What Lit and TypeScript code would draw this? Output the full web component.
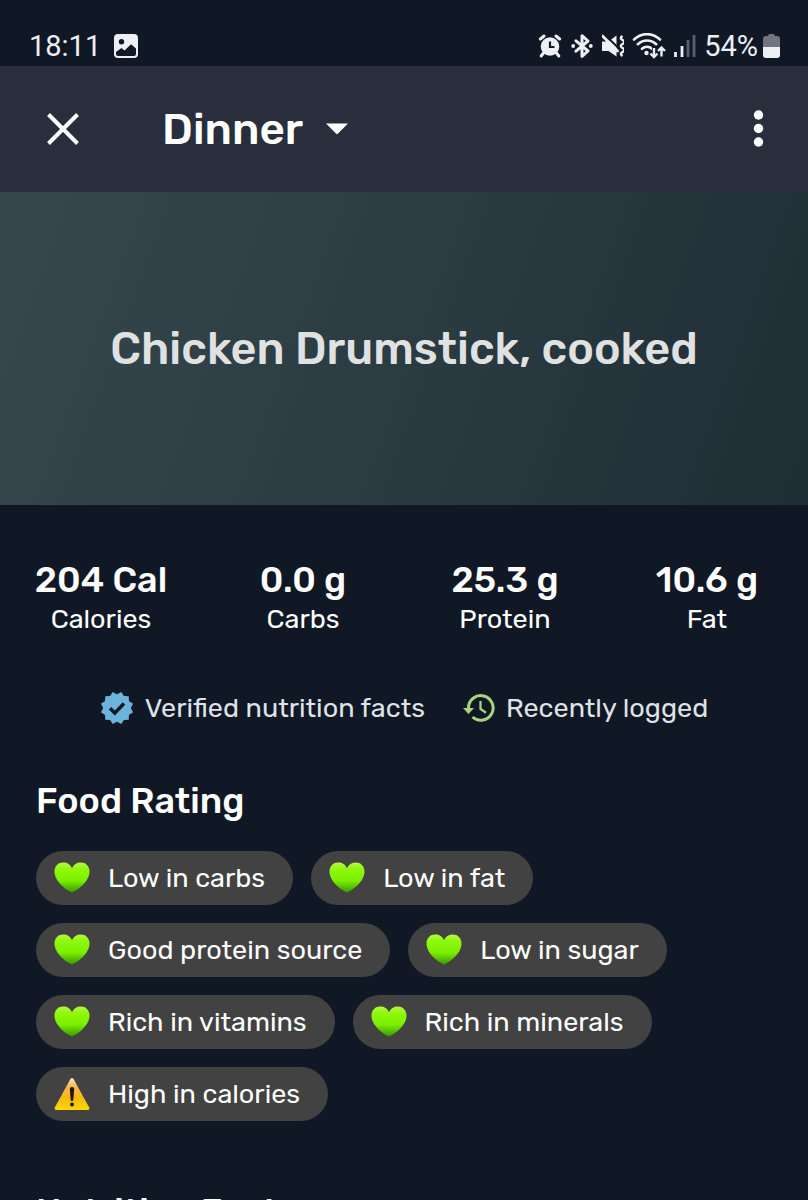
import { LitElement, html, svg, css } from "lit";
import { customElement } from "lit/decorators.js";

interface Rating {
  label: string;
  good: boolean;
}

const stats = [
  { value: "204 Cal", label: "Calories" },
  { value: "0.0 g", label: "Carbs" },
  { value: "25.3 g", label: "Protein" },
  { value: "10.6 g", label: "Fat" },
];

const ratings: Rating[] = [
  { label: "Low in carbs", good: true },
  { label: "Low in fat", good: true },
  { label: "Good protein source", good: true },
  { label: "Low in sugar", good: true },
  { label: "Rich in vitamins", good: true },
  { label: "Rich in minerals", good: true },
  { label: "High in calories", good: false },
];

const heart = html`<svg width="36" height="36" viewBox="0 0 36 36" aria-hidden="true">
  <defs>
    <linearGradient id="leaf" x1="0" y1="0" x2="0" y2="1">
      <stop offset="0" stop-color="#b9f548" />
      <stop offset="0.2" stop-color="#8ffa0c" />
      <stop offset="0.6" stop-color="#7cee00" />
      <stop offset="1" stop-color="#379a00" />
    </linearGradient>
  </defs>
  <path fill="url(#leaf)" d="M18 32.500C12.500 30 .500 22 .500 11.500C.500 6 4.400 2.600 9.200 2.600c4 0 7.300 2 8.800 5.700 1.500-3.700 4.800-5.700 8.800-5.700 4.800 0 8.700 3.400 8.700 8.900C35.500 22 23.500 30 18 32.500Z" />
</svg>`;

const warning = html`<svg width="36" height="36" viewBox="0 0 36 36" aria-hidden="true">
  <defs>
    <linearGradient id="amber" x1="0" y1="0" x2="0" y2="1">
      <stop offset="0" stop-color="#ffe3c8" />
      <stop offset="0.3" stop-color="#fdb544" />
      <stop offset="0.62" stop-color="#fdb813" />
      <stop offset="1" stop-color="#ffd800" />
    </linearGradient>
  </defs>
  <path fill="url(#amber)" d="M16.300 3.200q1.700-2.600 3.400 0L35.200 31.500q.800 2.500-1.800 2.500H2.600Q0 34 .800 31.500Z" />
  <path fill="#221600" d="M15.800 12.800q0-1.800 2.200-1.800t2.200 1.800l-.900 11.200q-.100 1-1.300 1t-1.300-1Z" />
  <circle cx="18" cy="28.500" r="2" fill="#221600" />
</svg>`;

/* Twelve-pointed badge outline: outer and inner vertices alternate. */
const sealPoints = Array.from({ length: 24 }, (_, i) => {
  const a = (Math.PI * (i + 1)) / 12;
  const r = i % 2 ? 13.8 : 16.6;
  return `${(17 + r * Math.cos(a)).toFixed(2)},${(17 + r * Math.sin(a)).toFixed(2)}`;
}).join(" ");

@customElement("app-root")
export class AppRoot extends LitElement {
  static styles = css`
    :host {
      display: flex;
      flex-direction: column;
      height: 100vh;
      background: #111825;
      color: #fff;
      font-family: Rubik, Roboto, sans-serif;
    }
    * {
      box-sizing: border-box;
    }
    svg {
      display: block;
      flex: none;
    }
    .status {
      display: flex;
      align-items: center;
      justify-content: space-between;
      flex: none;
      padding: 26px 28px 0 29px;
      height: 66px;
      color: #eceff3;
      font-family: Roboto, sans-serif;
      font-size: 29px;
      line-height: 40px;
    }
    .group {
      display: flex;
      align-items: center;
      gap: 13px;
    }
    .signals {
      gap: 8px;
    }
    .charge {
      display: flex;
      align-items: center;
      gap: 5px;
    }
    .bar {
      display: flex;
      align-items: center;
      flex: none;
      height: 126px;
      padding: 0 24px 0 36px;
      background: #282e3c;
    }
    .icon-button {
      display: flex;
      padding: 0;
      border: 0;
      background: none;
      color: inherit;
      cursor: pointer;
    }
    .meal {
      display: flex;
      align-items: center;
      flex: 1;
      padding-left: 72px;
    }
    .meal-select {
      appearance: none;
      margin: 0 -44px 0 0;
      padding: 0 66px 0 0;
      border: 0;
      background: none;
      color: inherit;
      font: 500 44px/56px Rubik, Roboto, sans-serif;
      cursor: pointer;
    }
    .caret {
      pointer-events: none;
    }
    .content {
      flex: 1;
      min-height: 0;
      overflow-y: auto;
      scrollbar-width: none;
    }
    .hero {
      display: grid;
      place-items: center;
      min-height: 313px;
      padding: 0 36px;
      background: linear-gradient(110deg, #37474d 0%, #2a3b42 52%, #1f2d35 100%);
    }
    .name {
      margin: 0;
      color: #e0e1e1;
      font-size: 45px;
      line-height: 56px;
      font-weight: 500;
      text-align: center;
    }
    .stats {
      display: grid;
      grid-template-columns: repeat(4, 1fr);
      margin: 0;
      padding-top: 54px;
      text-align: center;
    }
    .stat {
      display: flex;
      flex-direction: column-reverse;
    }
    .stat-value {
      margin: 0;
      font-size: 36px;
      line-height: 42px;
      font-weight: 500;
    }
    .stat-label {
      font-size: 27px;
      line-height: 36px;
    }
    .facts {
      display: flex;
      flex-wrap: wrap;
      justify-content: center;
      gap: 12px 38px;
      padding: 53px 36px 0;
      color: #dfe2e6;
      font-size: 27px;
      line-height: 36px;
    }
    .fact {
      display: flex;
      align-items: center;
      gap: 11px;
    }
    .section {
      padding: 52px 36px 0;
    }
    .heading {
      margin: 0;
      font-size: 36px;
      line-height: 46px;
      font-weight: 500;
    }
    .chips {
      display: flex;
      flex-wrap: wrap;
      gap: 18px;
      margin: 0;
      padding: 27px 0 16px;
      list-style: none;
    }
    .chip {
      display: flex;
      align-items: center;
      gap: 18px;
      height: 54px;
      padding: 0 28px 0 18px;
      border-radius: 27px;
      background: #424242;
      font-size: 27px;
      line-height: 36px;
    }
  `;

  render() {
    return html`
      <div class="status">
        <div class="group">
          <span>18:11</span>
          <svg width="24" height="24" viewBox="0 0 24 24" aria-hidden="true">
            <path fill="currentColor" fill-rule="evenodd" d="M4 0h16a4 4 0 0 1 4 4v16a4 4 0 0 1-4 4H4a4 4 0 0 1-4-4V4a4 4 0 0 1 4-4Zm3.500 5a2.700 2.700 0 1 0 0 5.400 2.700 2.700 0 0 0 0-5.400ZM2 18v2q0 2 2 2h16q2 0 2-2v-5.500l-5-4.300-6.500 6.300-3-2.500Z" />
          </svg>
        </div>
        <div class="group signals">
          <svg width="24" height="24" viewBox="0 0 24 24" aria-hidden="true">
            <circle cx="12" cy="12.500" r="9.300" fill="currentColor" />
            <path d="M2.400 5 6 2M21.600 5 18 2M5.500 19l-2.300 3M18.500 19l2.300 3" stroke="currentColor" stroke-width="3" stroke-linecap="round" />
            <path d="M12 7.500V13h4.500" fill="none" stroke="#111825" stroke-width="2.200" />
          </svg>
          <svg width="24" height="24" viewBox="0 0 24 24" aria-hidden="true">
            <path d="M6 6.800 18 17l-6 5.300V1.700L18 7 6 17.200" fill="none" stroke="currentColor" stroke-width="3" stroke-linejoin="round" stroke-linecap="round" />
            <circle cx="3.200" cy="12" r="1.900" fill="currentColor" />
            <circle cx="20.800" cy="12" r="1.900" fill="currentColor" />
          </svg>
          <svg width="22" height="24" viewBox="1 0 22 24" aria-hidden="true">
            <path fill="currentColor" d="M1 7.500h6.500L15.500 1.500v21L7.500 17H1Z" />
            <path d="M3 0 18 14.500" stroke="#111825" stroke-width="2" />
            <path d="M1.500 2 16.500 17" stroke="currentColor" stroke-width="2.800" stroke-linecap="round" />
            <path d="M21.500 2c-2.300 1.700-2.300 2.700 0 4s2.300 2.700 0 4-2.300 2.700 0 4 2.300 2.700 0 4-2 2.500 0 4" fill="none" stroke="currentColor" stroke-width="2.400" />
          </svg>
          <svg width="34" height="26" viewBox="0 0 34 26" aria-hidden="true">
            <g fill="none" stroke="currentColor" stroke-width="2.600" stroke-linecap="round">
              <path d="M2 6.500C10-.700 20-.700 28 6.500M5.800 11.200c5.600-5 12.800-5 18.400 0M10 15.800c3-2.700 7-2.700 10 0" />
            </g>
            <circle cx="14.500" cy="20" r="2.200" fill="currentColor" />
            <g fill="none" stroke="#111825" stroke-width="5">
              <path d="M22.500 14v10M30 24V15" />
            </g>
            <g fill="none" stroke="currentColor" stroke-width="2.400">
              <path d="M22 15v9M18.500 20.500l3.500 3.500 3.500-3.500M29.500 23.500v-9M26 18l3.500-3.500L33 18" />
            </g>
          </svg>
          <svg width="22" height="24" viewBox="0 0 22 24" aria-hidden="true">
            <path d="M1.500 23v-5M8 23V12" stroke="currentColor" stroke-width="2.800" />
            <path d="M14 23V6M20 23V1" stroke="#5a606b" stroke-width="2.800" />
          </svg>
          <span class="charge">
            <span>54%</span>
            <svg width="17" height="24" viewBox="0 0 17 24" aria-hidden="true">
              <path fill="#6f747f" d="M5 2q0-2 2-2h3q2 0 2 2h2q3 0 3 3v8H0V5q0-3 3-3Z" />
              <path fill="currentColor" d="M0 13h17v8q0 3-3 3H3q-3 0-3-3Z" />
            </svg>
          </span>
        </div>
      </div>

      <header class="bar">
        <button class="icon-button" type="button" aria-label="Close">
          <svg width="54" height="54" viewBox="0 0 54 54" aria-hidden="true">
            <path d="m12.500 12.500 29 29M41.500 12.500l-29 29" stroke="currentColor" stroke-width="4" />
          </svg>
        </button>
        <div class="meal">
          <select class="meal-select" aria-label="Meal">
            <option>Dinner</option>
          </select>
          <svg class="caret" width="22" height="12" viewBox="0 0 22 12" aria-hidden="true">
            <path fill="currentColor" d="M0 .500h22l-11 11Z" />
          </svg>
        </div>
        <button class="icon-button" type="button" aria-label="More options">
          <svg width="52" height="54" viewBox="0 0 52 54" aria-hidden="true">
            <g fill="currentColor">
              <circle cx="26.500" cy="13" r="4.700" />
              <circle cx="26.500" cy="26.500" r="4.700" />
              <circle cx="26.500" cy="40" r="4.700" />
            </g>
          </svg>
        </button>
      </header>

      <main class="content">
        <div class="hero">
          <h1 class="name">Chicken Drumstick, cooked</h1>
        </div>

        <dl class="stats">
          ${stats.map(
            (s) => html`<div class="stat">
              <dt class="stat-label">${s.label}</dt>
              <dd class="stat-value">${s.value}</dd>
            </div>`
          )}
        </dl>

        <div class="facts">
          <span class="fact">
            <svg width="34" height="34" viewBox="0 0 34 34" aria-hidden="true">
              ${svg`<polygon points=${sealPoints} fill="#6bb5dc" />`}
              <path d="m10 17.200 4.800 4.800 9.200-9.500" fill="none" stroke="#111825" stroke-width="3.400" />
            </svg>
            Verified nutrition facts
          </span>
          <span class="fact">
            <svg width="32" height="32" viewBox="0 0 32 32" aria-hidden="true">
              <path d="M5.500 16A12.300 12.300 0 1 1 9.500 25" fill="none" stroke="#a9d47c" stroke-width="3" />
              <path d="M0 16h11l-5.500 6Z" fill="#a9d47c" />
              <path d="M17.500 9v8l5.500 3.800" fill="none" stroke="#a9d47c" stroke-width="2.300" />
            </svg>
            Recently logged
          </span>
        </div>

        <section class="section">
          <h2 class="heading">Food Rating</h2>
          <ul class="chips">
            ${ratings.map((r) => html`<li class="chip">${r.good ? heart : warning}<span>${r.label}</span></li>`)}
          </ul>
        </section>

        <section class="section">
          <h2 class="heading">Nutrition Facts</h2>
        </section>
      </main>
    `;
  }
}
